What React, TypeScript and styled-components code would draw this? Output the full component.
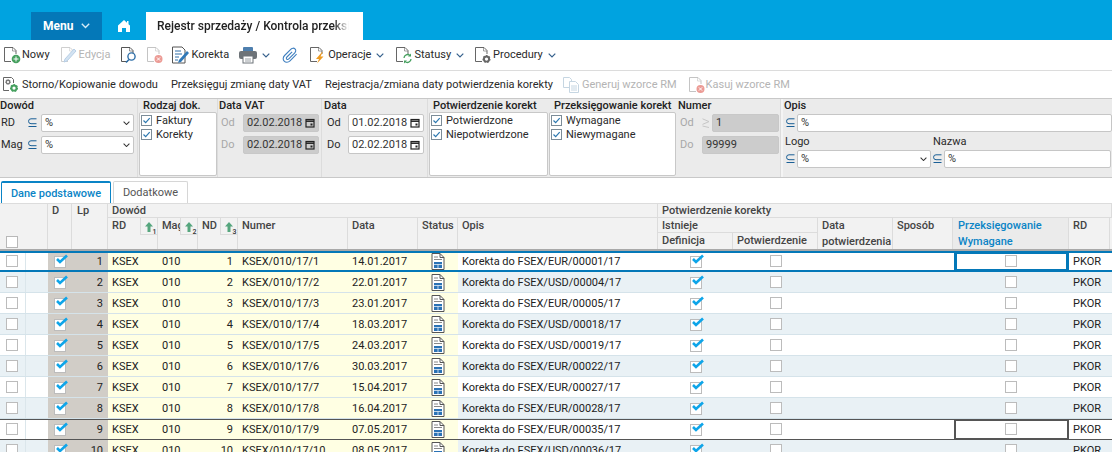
import React from "react";
import styled, { createGlobalStyle } from "styled-components";

const Global = createGlobalStyle`
  html, body { margin: 0; padding: 0; width: 1112px; height: 452px; overflow: hidden; background: #fff; }
  body { font-family: Roboto, "Liberation Sans", sans-serif; font-size: 11px; color: #222; }
  * { box-sizing: border-box; }
`;

const Page = styled.div`width: 1112px; height: 452px; overflow: hidden; display: flex; flex-direction: column;`;

/* top bar */
const TopBar = styled.header`height: 40px; flex: none; background: #00a3e0; display: flex; align-items: flex-end; padding-left: 31px;`;
const MenuButton = styled.div`width: 71px; height: 28px; background: #0478b8; color: #fff; font-weight: 700; font-size: 12px; display: flex; align-items: center; padding-left: 12px; gap: 8px;`;
const HomeSlot = styled.div`width: 44px; height: 28px; display: flex; align-items: center; justify-content: center;`;
const ActiveTab = styled.div`width: 217px; height: 28px; background: #fff; color: #222; font-weight: 500; font-size: 12px; display: flex; align-items: center; padding-left: 11px;`;
const TabText = styled.span`display: block; width: 192px; white-space: nowrap; overflow: hidden; -webkit-mask-image: linear-gradient(90deg, #000 92%, transparent 100%); mask-image: linear-gradient(90deg, #000 92%, transparent 100%);`;

/* toolbars */
const Toolbar = styled.div<{ $h: number; $line?: boolean }>`height: ${p => p.$h}px; flex: none; display: flex; align-items: center; border-bottom: ${p => (p.$line ? "1px solid #dcdcdc" : "none")}; white-space: nowrap;`;
const Tool = styled.div<{ $x: number; $off?: boolean; $gap?: number }>`margin-left: ${p => p.$x}px; display: flex; align-items: center; gap: ${p => p.$gap ?? 1}px; color: ${p => (p.$off ? "#b4b4b4" : "#2a2a2a")}; line-height: 16px;`;
const ChevSlot = styled.span`margin-left: 4px; display: flex;`;

/* filter */
const Filters = styled.section`height: 80px; flex: none; background: #ebebeb; border-top: 1px solid #c8c8c8; border-bottom: 1px solid #c8c8c8; display: flex; line-height: 14px;`;
const Group = styled.div<{ $w: number; $sep?: boolean }>`width: ${p => p.$w}px; flex: none; height: 100%; display: flex; flex-direction: column; border-right: ${p => (p.$sep ? "1px solid #dcdcdc" : "none")};`;
const OpisGroup = styled(Group)`box-shadow: inset 2px 0 0 #f4f4f4;`;
const GroupTitle = styled.div<{ $pl: number }>`font-weight: 500; padding-left: ${p => p.$pl}px; height: 13px; line-height: 13px; color: #222; white-space: nowrap;`;
const FieldRow = styled.div<{ $pl?: number; $gap?: number }>`height: 18px; margin: 2px 0; display: flex; align-items: center; flex: none; padding-left: ${p => p.$pl ?? 0}px; gap: ${p => p.$gap ?? 0}px;`;
const Label = styled.span<{ $w: number; $off?: boolean }>`width: ${p => p.$w}px; flex: none; color: ${p => (p.$off ? "#a8a8a8" : "#2a2a2a")};`;
const Input = styled.div<{ $w: number; $off?: boolean }>`width: ${p => p.$w}px; height: 18px; flex: none; border: 1px solid ${p => (p.$off ? "#c8c8c8" : "#c6c6c6")}; border-radius: 2px; background: ${p => (p.$off ? "#cccccc" : "#fff")}; display: flex; align-items: center; justify-content: space-between; padding: 0 3px; color: #333;`;
const ListBox = styled.div<{ $w: number; $ml: number }>`width: ${p => p.$w}px; margin-left: ${p => p.$ml}px; height: 64px; background: #fff; border: 1px solid #c8c8c8; border-radius: 2px; padding: 1px; display: flex; flex-direction: column; gap: 1px;`;
const ListItem = styled.div`display: flex; align-items: center; gap: 4px; height: 13px; color: #2a2a2a;`;
const OpisLabels = styled.div`display: flex; flex: none; height: 14px; margin-top: 1px; margin-bottom: -1px; padding-left: 4px; color: #2a2a2a; line-height: 14px;`;
const OpisLabel = styled.span<{ $w: number }>`width: ${p => p.$w}px; flex: none;`;

/* tabs */
const TabsRow = styled.div`height: 25px; flex: none; display: flex; align-items: flex-end; padding-left: 1px; gap: 2px;`;
const SubTab = styled.div<{ $w: number; $on?: boolean }>`width: ${p => p.$w}px; height: 22px; display: flex; align-items: center; justify-content: center; font-weight: ${p => (p.$on ? 500 : 400)}; color: ${p => (p.$on ? "#0a84c6" : "#555")}; border: 1px solid ${p => (p.$on ? "#0a84c6" : "#d6d6d6")}; border-top-width: ${p => (p.$on ? 2 : 1)}px; border-bottom: none; border-radius: 2px 2px 0 0;`;

/* table */
const COLS = "26px 22px 24px 36px 50px 40px 40px 110px 70px 40px 200px 75px 85px 75px 60px 116px 41px 2px";
const HeadGrid = styled.div`display: grid; flex: none; grid-template-columns: ${COLS}; grid-template-rows: 14px 15px 16px; height: 48px; background: #f2f2f2; border-top: 1px solid #dcdcdc; border-bottom: 2px solid #a9a9a9; font-weight: 500;`;
const Head = styled.div<{ $c: string; $r: string; $on?: boolean; $open?: boolean; $pl?: number }>`grid-column: ${p => p.$c}; grid-row: ${p => p.$r}; position: relative; padding-left: ${p => p.$pl ?? 4}px; line-height: 16px; border-right: 1px solid #dcdcdc; border-bottom: ${p => (p.$open ? "none" : "1px solid #dcdcdc")}; white-space: nowrap; overflow: hidden; color: ${p => (p.$on ? "#0a84c6" : "#444")}; background: ${p => (p.$on ? "#ebebeb" : "transparent")};`;
const HeadTop = styled(Head)`line-height: 13px;`;
const Sort = styled.span`position: absolute; right: 0; top: 0; width: 17px; height: 17px; border-left: 1px solid #dcdcdc; border-bottom: 1px solid #dcdcdc; background: #f2f2f2; display: flex;`;
const HeadBox = styled.span`position: absolute; left: 6px; bottom: 1px; width: 12px; height: 12px; background: #fff; border: 1px solid #b8b8b8;`;

const Rows = styled.div`display: flex; flex-direction: column;`;
const Row = styled.div<{ $alt: boolean; $mark?: "blue" | "dark" }>`display: grid; height: 21px; flex: none; position: relative; grid-template-columns: ${COLS}; background: ${p => (p.$alt ? "#e9f1f5" : "#fff")}; border-bottom: 1px solid #d5e3ea;
  &::after { content: ${p => (p.$mark ? '""' : "none")}; position: absolute; left: 0; right: 0; top: 0; bottom: -1px; pointer-events: none; border-top: ${p => (p.$mark === "blue" ? "2px solid #0478b8" : "1px solid #555")}; border-bottom: ${p => (p.$mark === "blue" ? "2px solid #0478b8" : "1px solid #555")}; }`;
const Cell = styled.div<{ $tone?: "mark" | "yellow"; $align?: "left" | "right" | "center"; $pad?: number; $line?: boolean }>`background: ${p => (p.$tone === "mark" ? "#d1cdc7" : p.$tone === "yellow" ? "#ffffe3" : "transparent")}; color: #222; white-space: nowrap; overflow: hidden; display: flex; align-items: center; padding: 0 ${p => (p.$align === "right" ? 5 : 0)}px 0 ${p => (p.$align === "center" || p.$align === "right" ? 0 : p.$pad ?? 4)}px; justify-content: ${p => (p.$align === "right" ? "flex-end" : p.$align === "center" ? "center" : "flex-start")}; border-right: ${p => (p.$line ? "1px solid #dbe6eb" : "none")};`;
const FocusCell = styled(Cell)<{ $dark?: boolean }>`position: relative; z-index: 1; overflow: visible;
  &::before { content: ""; position: absolute; left: 1px; right: 0; top: 0; bottom: -1px; border: ${p => (p.$dark ? "2px solid #555" : "3px solid #0478b8")}; background: #fff; }
  > * { position: relative; }`;
const Box = styled.span<{ $ticked?: boolean }>`width: 12px; height: 12px; flex: none; display: block; position: relative; margin-top: ${p => (p.$ticked ? 2 : 0)}px; background: #fff; border: 1px solid #bcbcbc;`;
const Tick = styled.svg`position: absolute; left: 0; top: -3px; width: 13px; height: 10px;`;

/* icons */
const Chev = ({ c = "#35608c", w = 8 }: { c?: string; w?: number }) => (
  <svg width={w} height={w * 0.625} viewBox="0 0 8 5" fill="none"><path d="M.7.7 4 4 7.300.7" stroke={c} strokeWidth="1.200" /></svg>
);
const Home = () => (
  <svg width="12" height="12" viewBox="0 0 12 12" fill="#fff"><path d="M6 0 0 5.600V12h4V8h4v4h4V5.600L10.500 4.200V1H9v1.800z" /></svg>
);
const Doc = ({ c = "#666", children }: { c?: string; children?: React.ReactNode }) => (
  <svg width="18" height="18" viewBox="0 0 18 18" fill="none">
    <path d="M8 15.500H1.500V1.500h8.500l3 3v3.500" stroke={c} />
    <path d="M9.500 1.500V5H13" stroke={c} strokeOpacity=".6" />
    {children}
  </svg>
);
const Plus = () => (<Doc><circle cx="13" cy="13" r="4.300" fill="#46a05f" /><path d="M13 10.500v5M10.500 13h5" stroke="#fff" /></Doc>);
const Cancel = ({ c = "#c4c4c4" }: { c?: string }) => (<Doc c={c}><circle cx="12.500" cy="13" r="4" fill="#ec9b95" /><path d="m10.900 11.400 3.200 3.200m0-3.200-3.200 3.200" stroke="#fff" /></Doc>);
const Edit = () => (<Doc c="#cfcfcf"><path d="m5 13 9-10 2 2-9 10-3 1z" fill="#d3e3f2" stroke="#b8cfe6" /></Doc>);
const Search = () => (<Doc c="#555"><circle cx="11.500" cy="10.500" r="3.600" fill="#fff" stroke="#2f6fa8" strokeWidth="1.400" /><path d="m9 13.500-3 3" stroke="#2f6fa8" strokeWidth="1.600" /></Doc>);
const Korekta = () => (
  <svg width="18" height="18" viewBox="0 0 18 18" fill="none">
    <path d="M.5 1h9.500l3 3v13H.5z" stroke="#555" fill="#fff" />
    <path d="M3 5h6M3 8h7M3 11h4M3 14h3" stroke="#2f6fa8" />
    <path d="m7 14 8-9 2 2-8 9-3 .8z" fill="#2f78b8" />
  </svg>
);
const Printer = () => (
  <svg width="18" height="18" viewBox="0 0 18 18">
    <rect x="4" y="1" width="10" height="5" rx="1" fill="#4e7fae" />
    <rect x="0" y="5" width="18" height="8" rx="2" fill="#6d7378" />
    <rect x="4" y="10" width="10" height="7" fill="#fff" stroke="#6d7378" />
    <path d="M6 13h6M6 15h6" stroke="#9aa0a5" />
  </svg>
);
const Clip = () => (
  <svg width="17" height="17" viewBox="0 0 17 17" fill="none">
    <path d="M14.600 7.200 8 13.800c-1.800 1.800-4.400 1.800-5.800.4-1.400-1.400-1.400-3.900.4-5.700l6.400-6.400c1.200-1.200 3-1.200 4-.2s1 2.800-.2 4l-6 6c-.7.7-1.600.7-2.100.2s-.5-1.400.2-2.100l5.200-5.200" stroke="#3f7fbf" strokeWidth="1.100" />
  </svg>
);
const Bolt = () => (<Doc><path d="M13 6 7 13h3l-2 4.500 6.500-7h-3l2.200-4.500z" fill="#ee9b22" /></Doc>);
const Sync = () => (<Doc><path d="M9 12a3.500 3.500 0 0 1 6-2.400M16 13a3.500 3.500 0 0 1-6 2.400" stroke="#46a05f" strokeWidth="1.300" /><path d="M16 7.500v3h-3zM9 17.500v-3h3z" fill="#46a05f" /></Doc>);
const Gear = ({ x = 12.500, y = 13, r = 2.600, c = "#666" }: { x?: number; y?: number; r?: number; c?: string }) => (
  <g>
    <circle cx={x} cy={y} r={r} fill="none" stroke={c} strokeWidth={r * 0.75} />
    <circle cx={x} cy={y} r={r * 1.35} fill="none" stroke={c} strokeWidth={r * 0.4} strokeDasharray={`${r * 0.6} ${r * 0.6}`} />
  </g>
);
const Proc = () => (<Doc><Gear /></Doc>);
const Storno = () => (
  <svg width="16" height="16" viewBox="0 0 16 16" fill="none">
    <path d="M10.500 6V2.500l-2-2H.5v13H6" stroke="#666" />
    <Gear x={5} y={5} r={1.800} c="#777" />
    <Gear x={11} y={11} r={2.600} c="#46a05f" />
  </svg>
);
const Copy = () => (
  <svg width="16" height="16" viewBox="0 0 16 16" fill="none" stroke="#c6d6e2">
    <path d="M.5.5h6l2 2v8h-8z" />
    <path d="M6.500 4.500h6l3 3v8h-9z" fill="#fff" />
    <path d="M8 9h6M8 11h6M8 13h6" />
  </svg>
);
const Subset = ({ c = "#1a5f96" }: { c?: string }) => (
  <svg width="9" height="10" viewBox="0 0 9 10" fill="none" stroke={c} style={{ flex: "none" }}>
    <path d="M8.500.8H3a2.200 2.200 0 0 0 0 4.900h5.500M.5 8.500h8" />
  </svg>
);
const Superset = () => (
  <svg width="8" height="10" viewBox="0 0 8 10" fill="none" stroke="#c6c6c6" style={{ flex: "none" }}>
    <path d="m.5.8 6.500 2.800-6.500 2.800M.5 8 7 9.500" />
  </svg>
);
const Cal = () => (
  <svg width="10" height="10" viewBox="0 0 10 10" fill="none" stroke="#222">
    <rect x="1" y="1.500" width="8" height="7.500" strokeWidth="1.200" />
    <path d="M1 3.200h8" strokeWidth="1.500" />
    <rect x="5.500" y="5.500" width="2" height="2" fill="#222" stroke="none" />
  </svg>
);
const Check = () => (
  <svg width="11" height="11" viewBox="0 0 11 11" fill="#fff" style={{ flex: "none" }}>
    <rect x=".5" y=".5" width="10" height="10" stroke="#7c8c98" />
    <path d="m2.500 5.500 2.200 2.200 4-4.500" fill="none" stroke="#2c78b0" strokeWidth="1.200" />
  </svg>
);
const StatusDoc = () => (
  <svg width="14" height="17" viewBox="0 0 14 17" fill="none">
    <path d="M1 .5h8l4 4v12H1z" fill="#fff" stroke="#555" />
    <path d="M9 .5v4h4" stroke="#555" />
    <path d="M3 4h4M3 6.500h8" stroke="#888" />
    <rect x="3" y="9" width="8" height="6" fill="#2a72b5" />
    <path d="M3 11.500h8M7 11.500V15" stroke="#fff" strokeWidth=".7" />
  </svg>
);
const SortIcon = ({ n }: { n: number }) => (
  <svg width="16" height="16" viewBox="0 0 16 16">
    <path d="M8 4 4 8.500h2.500V14h3V8.500H12z" fill="#56a67e" />
    <text x="11.500" y="16" fontSize="7" fill="#333" fontFamily="Roboto, sans-serif">{n}</text>
  </svg>
);
const BlueTick = () => (
  <Tick viewBox="0 0 13 10"><path d="m2 5 3 3 7-6.500" fill="none" stroke="#0ea5e9" strokeWidth="2.600" /></Tick>
);

const DateField = ({ v, off }: { v: string; off?: boolean }) => (
  <Input $w={76} $off={off}>{v}<Cal /></Input>
);

const data: [string, string, string][] = [
  ["14.01.2017", "EUR", "00001"], ["22.01.2017", "USD", "00004"], ["23.01.2017", "EUR", "00005"],
  ["18.03.2017", "USD", "00018"], ["24.03.2017", "USD", "00019"], ["30.03.2017", "EUR", "00022"],
  ["15.04.2017", "EUR", "00027"], ["16.04.2017", "EUR", "00028"], ["07.05.2017", "EUR", "00035"],
  ["08.05.2017", "USD", "00036"],
];

const ListGroup = ({ w, ml, bw, pl, title, items, sep }: { w: number; ml: number; bw: number; pl: number; title: string; items: string[]; sep?: boolean }) => (
  <Group $w={w} $sep={sep}>
    <GroupTitle $pl={pl}>{title}</GroupTitle>
    <ListBox $w={bw} $ml={ml}>
      {items.map(i => <ListItem key={i}><Check />{i}</ListItem>)}
    </ListBox>
  </Group>
);

export default function App() {
  return (
    <Page>
      <Global />
      <TopBar>
        <MenuButton>Menu <Chev c="#d6ecf7" w={9} /></MenuButton>
        <HomeSlot><Home /></HomeSlot>
        <ActiveTab><TabText>Rejestr sprzedaży / Kontrola przeksięgowania</TabText></ActiveTab>
      </TopBar>

      <Toolbar $h={31} $line>
        <Tool $x={3}><Plus />Nowy</Tool>
        <Tool $x={10} $off><Edit />Edycja</Tool>
        <Tool $x={10}><Search /></Tool>
        <Tool $x={8}><Cancel /></Tool>
        <Tool $x={8}><Korekta />Korekta</Tool>
        <Tool $x={10}><Printer /><ChevSlot><Chev /></ChevSlot></Tool>
        <Tool $x={12}><Clip /></Tool>
        <Tool $x={10}><Bolt />Operacje<ChevSlot><Chev /></ChevSlot></Tool>
        <Tool $x={11}><Sync />Statusy<ChevSlot><Chev /></ChevSlot></Tool>
        <Tool $x={10}><Proc />Procedury<ChevSlot><Chev /></ChevSlot></Tool>
      </Toolbar>
      <Toolbar $h={27}>
        <Tool $x={3} $gap={3}><Storno />Storno/Kopiowanie dowodu</Tool>
        <Tool $x={13}>Przeksięguj zmianę daty VAT</Tool>
        <Tool $x={13}>Rejestracja/zmiana daty potwierdzenia korekty</Tool>
        <Tool $x={10} $gap={3} $off><Copy />Generuj wzorce RM</Tool>
        <Tool $x={11} $gap={0} $off><Cancel />Kasuj wzorce RM</Tool>
      </Toolbar>

      <Filters>
        <Group $w={138} $sep>
          <GroupTitle $pl={0}>Dowód</GroupTitle>
          <FieldRow $pl={1} $gap={4}><Label $w={23}>RD</Label><Subset /><Input $w={93}>%<Chev c="#333" w={7} /></Input></FieldRow>
          <FieldRow $pl={1} $gap={4}><Label $w={23}>Mag</Label><Subset /><Input $w={93}>%<Chev c="#333" w={7} /></Input></FieldRow>
        </Group>
        <ListGroup w={80} ml={1} bw={78} pl={5} title="Rodzaj dok." items={["Faktury", "Korekty"]} sep />
        <Group $w={104} $sep>
          <GroupTitle $pl={1}>Data VAT</GroupTitle>
          <FieldRow $pl={3}><Label $w={22} $off>Od</Label><DateField v="02.02.2018" off /></FieldRow>
          <FieldRow $pl={3}><Label $w={22} $off>Do</Label><DateField v="02.02.2018" off /></FieldRow>
        </Group>
        <Group $w={106} $sep>
          <GroupTitle $pl={2}>Data</GroupTitle>
          <FieldRow $pl={5}><Label $w={21}>Od</Label><DateField v="01.02.2018" /></FieldRow>
          <FieldRow $pl={5}><Label $w={21}>Do</Label><DateField v="02.02.2018" /></FieldRow>
        </Group>
        <ListGroup w={121} ml={1} bw={119} pl={5} title="Potwierdzenie korekt" items={["Potwierdzone", "Niepotwierdzone"]} />
        <ListGroup w={128} ml={0} bw={127} pl={5} title="Przeksięgowanie korekt" items={["Wymagane", "Niewymagane"]} />
        <Group $w={104} $sep>
          <GroupTitle $pl={1}>Numer</GroupTitle>
          <FieldRow $pl={3} $gap={2}><Label $w={20} $off>Od</Label><Superset /><Input $w={67} $off>1</Input></FieldRow>
          <FieldRow $pl={3} $gap={2}><Label $w={20} $off>Do</Label><Input $w={77} $off>99999</Input></FieldRow>
        </Group>
        <OpisGroup $w={331}>
          <GroupTitle $pl={3}>Opis</GroupTitle>
          <FieldRow $pl={5} $gap={2}><Subset /><Input $w={315}>%</Input></FieldRow>
          <OpisLabels><OpisLabel $w={148}>Logo</OpisLabel><OpisLabel $w={100}>Nazwa</OpisLabel></OpisLabels>
          <FieldRow $pl={5} $gap={2}><Subset /><Input $w={134}>%<Chev c="#333" w={7} /></Input><Subset /><Input $w={167}>%</Input></FieldRow>
        </OpisGroup>
      </Filters>

      <TabsRow>
        <SubTab $w={110} $on>Dane podstawowe</SubTab>
        <SubTab $w={75}>Dodatkowe</SubTab>
      </TabsRow>

      <HeadGrid>
        <Head $c="1 / 3" $r="1 / 4" $open><HeadBox /></Head>
        <HeadTop $c="3 / 4" $r="1 / 4" $open>D</HeadTop>
        <HeadTop $c="4 / 5" $r="1 / 4" $open $pl={5}>Lp</HeadTop>
        <HeadTop $c="5 / 12" $r="1 / 2">Dowód</HeadTop>
        <HeadTop $c="12 / 19" $r="1 / 2">Potwierdzenie korekty</HeadTop>
        <Head $c="5 / 6" $r="2 / 4" $open>RD<Sort><SortIcon n={1} /></Sort></Head>
        <Head $c="6 / 7" $r="2 / 4" $open>Mag<Sort><SortIcon n={2} /></Sort></Head>
        <Head $c="7 / 8" $r="2 / 4" $open>ND<Sort><SortIcon n={3} /></Sort></Head>
        <Head $c="8 / 9" $r="2 / 4" $open>Numer</Head>
        <Head $c="9 / 10" $r="2 / 4" $open>Data</Head>
        <Head $c="10 / 11" $r="2 / 4" $open>Status</Head>
        <Head $c="11 / 12" $r="2 / 4" $open>Opis</Head>
        <Head $c="12 / 14" $r="2 / 3">Istnieje</Head>
        <Head $c="12 / 13" $r="3 / 4" $open>Definicja</Head>
        <Head $c="13 / 14" $r="3 / 4" $open>Potwierdzenie</Head>
        <Head $c="14 / 15" $r="2 / 4" $open>Data<br />potwierdzenia</Head>
        <Head $c="15 / 16" $r="2 / 4" $open>Sposób</Head>
        <Head $c="16 / 17" $r="2 / 4" $open $on $pl={5}>Przeksięgowanie<br />Wymagane</Head>
        <Head $c="17 / 18" $r="2 / 4" $open>RD</Head>
        <Head $c="18 / 19" $r="2 / 4" $open />
      </HeadGrid>

      <Rows>
        {data.map(([date, cur, nr], i) => {
          const n = i + 1;
          const mark = n === 1 ? "blue" : n === 9 ? "dark" : undefined;
          return (
            <Row key={n} $alt={n % 2 === 0} $mark={mark}>
              <Cell $pad={6} $line><Box /></Cell>
              <Cell />
              <Cell $tone="mark" $align="center"><Box $ticked><BlueTick /></Box></Cell>
              <Cell $tone="mark" $align="right">{n}</Cell>
              <Cell $tone="yellow">KSEX</Cell>
              <Cell $tone="yellow">010</Cell>
              <Cell $tone="yellow" $align="right">{n}</Cell>
              <Cell $tone="yellow">{`KSEX/010/17/${n}`}</Cell>
              <Cell $tone="yellow">{date}</Cell>
              <Cell $tone="yellow" $align="center"><StatusDoc /></Cell>
              <Cell>{`Korekta do FSEX/${cur}/${nr}/17`}</Cell>
              <Cell $align="center"><Box $ticked><BlueTick /></Box></Cell>
              <Cell $align="center"><Box /></Cell>
              <Cell />
              <Cell />
              {mark ? (
                <FocusCell $align="center" $dark={mark === "dark"}><Box /></FocusCell>
              ) : (
                <Cell $align="center"><Box /></Cell>
              )}
              <Cell>PKOR</Cell>
              <Cell />
            </Row>
          );
        })}
      </Rows>
    </Page>
  );
}
